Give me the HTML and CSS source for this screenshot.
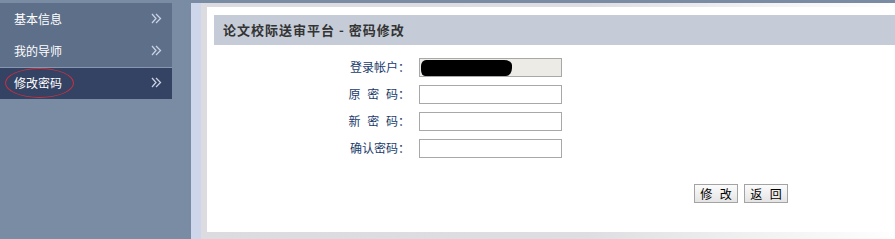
FILE: index.html
```html
<!DOCTYPE html>
<html lang="zh-CN">
<head>
<meta charset="utf-8">
<title>密码修改</title>
<link rel="stylesheet" href="styles.css">
</head>
<body>
<div class="page">
  <aside class="sidebar">
    <ul class="menu">
      <li class="menu-item"><span>基本信息</span><svg class="chev" viewBox="0 0 11 11" width="11" height="11"><path d="M1 1 L5 5.5 L1 10 M5 1 L9.5 5.5 L5 10"/></svg></li>
      <li class="menu-item"><span>我的导师</span><svg class="chev" viewBox="0 0 11 11" width="11" height="11"><path d="M1 1 L5 5.5 L1 10 M5 1 L9.5 5.5 L5 10"/></svg></li>
      <li class="menu-item active"><span>修改密码</span><svg class="chev" viewBox="0 0 11 11" width="11" height="11"><path d="M1 1 L5 5.5 L1 10 M5 1 L9.5 5.5 L5 10"/></svg><i class="mark"></i></li>
    </ul>
  </aside>
  <div class="gutter-blue"></div>
  <div class="gutter-gray"></div>
  <main class="main">
    <section class="panel">
      <h1 class="title">论文校际送审平台 - 密码修改</h1>
      <form class="form">
        <label class="label">登录帐户：</label>
        <div class="field readonly"><span class="blob"></span></div>
        <label class="label spaced">原 密 码：</label>
        <input class="field" type="password">
        <label class="label spaced">新 密 码：</label>
        <input class="field" type="password">
        <label class="label">确认密码：</label>
        <input class="field" type="password">
      </form>
      <div class="actions">
        <button class="btn" type="button">修 改</button>
        <button class="btn" type="button">返 回</button>
      </div>
    </section>
  </main>
</div>
</body>
</html>
```
FILE: styles.css
```css
* { box-sizing: border-box; }
html, body { margin: 0; padding: 0; }
body {
  font-family: "Noto Sans CJK SC", "Liberation Sans", sans-serif;
  font-size: 12px;
  background: #fff;
  width: 895px;
  height: 239px;
  overflow: hidden;
}
.page {
  display: flex;
  height: 239px;
  border-top: 3px solid #7a8ca4;
}
.sidebar {
  width: 191px;
  background: #7a8ca4;
  flex: none;
}
.menu {
  list-style: none;
  margin: 0;
  padding: 0;
  width: 172px;
}
.menu-item {
  position: relative;
  display: flex;
  align-items: center;
  justify-content: space-between;
  height: 32px;
  padding: 0 10px 2px 14px;
  background: #5e6f8a;
  color: #fff;
  font-size: 12px;
}
.menu-item.active {
  background: #344263;
  border-top: 1px solid #8797b0;
}
.chev { display: block; }
.chev path {
  fill: none;
  stroke: #c9d1e2;
  stroke-width: 1.3;
}
.mark {
  position: absolute;
  left: 5px;
  top: 0px;
  width: 69px;
  height: 30px;
  border: 1px solid #c8323f;
  border-radius: 50%;
}
.gutter-blue { width: 10px; flex: none; background: #cdd6ea; }
.gutter-gray { width: 6px; flex: none; background: #dcdce0; }
.main {
  flex: 1;
  padding: 4px 0 7px 0;
  background: linear-gradient(to right, #dcdce0 0, #dedee2 380px, #f2f2f3 560px, #fff 700px);
}
.panel {
  background: #fff;
  height: 225px;
  padding: 8px 0 0 7px;
}
.title {
  margin: 0;
  height: 30px;
  line-height: 30px;
  padding-left: 9px;
  background: #c5ccd8;
  color: #333;
  font-size: 13px;
  font-weight: bold;
  letter-spacing: 1px;
}
.form {
  display: grid;
  grid-template-columns: 100px 143px;
  column-gap: 9px;
  row-gap: 8px;
  margin: 13px 0 0 96px;
  align-items: center;
}
.label {
  text-align: right;
  color: #1b3b6b;
  font-size: 12px;
  line-height: 19px;
  margin-top: -3px;
}
.label.spaced { word-spacing: 4px; }
.field {
  display: block;
  width: 143px;
  height: 19px;
  margin: 0;
  padding: 0 2px;
  border: 1px solid #a8a8a8;
  background: #fff;
  font-size: 12px;
  outline: none;
}
.field.readonly {
  background: #ecebe5;
  padding: 0;
  overflow: hidden;
}
.blob {
  display: block;
  width: 91px;
  height: 16px;
  margin: 1px 0 0 1px;
  background: #000;
  border-radius: 5px 8px 6px 4px / 6px 5px 8px 6px;
}
.actions {
  display: flex;
  gap: 6px;
  margin: 26px 0 0 480px;
}
.btn {
  width: 44px;
  height: 19px;
  padding: 0;
  border: 1px solid #a3a3a3;
  background: linear-gradient(#fbfbfb, #e4e4e4);
  color: #000;
  font-family: "Noto Sans CJK SC", "Liberation Sans", sans-serif;
  font-size: 12px;
  line-height: 17px;
  word-spacing: 5px;
}
```
